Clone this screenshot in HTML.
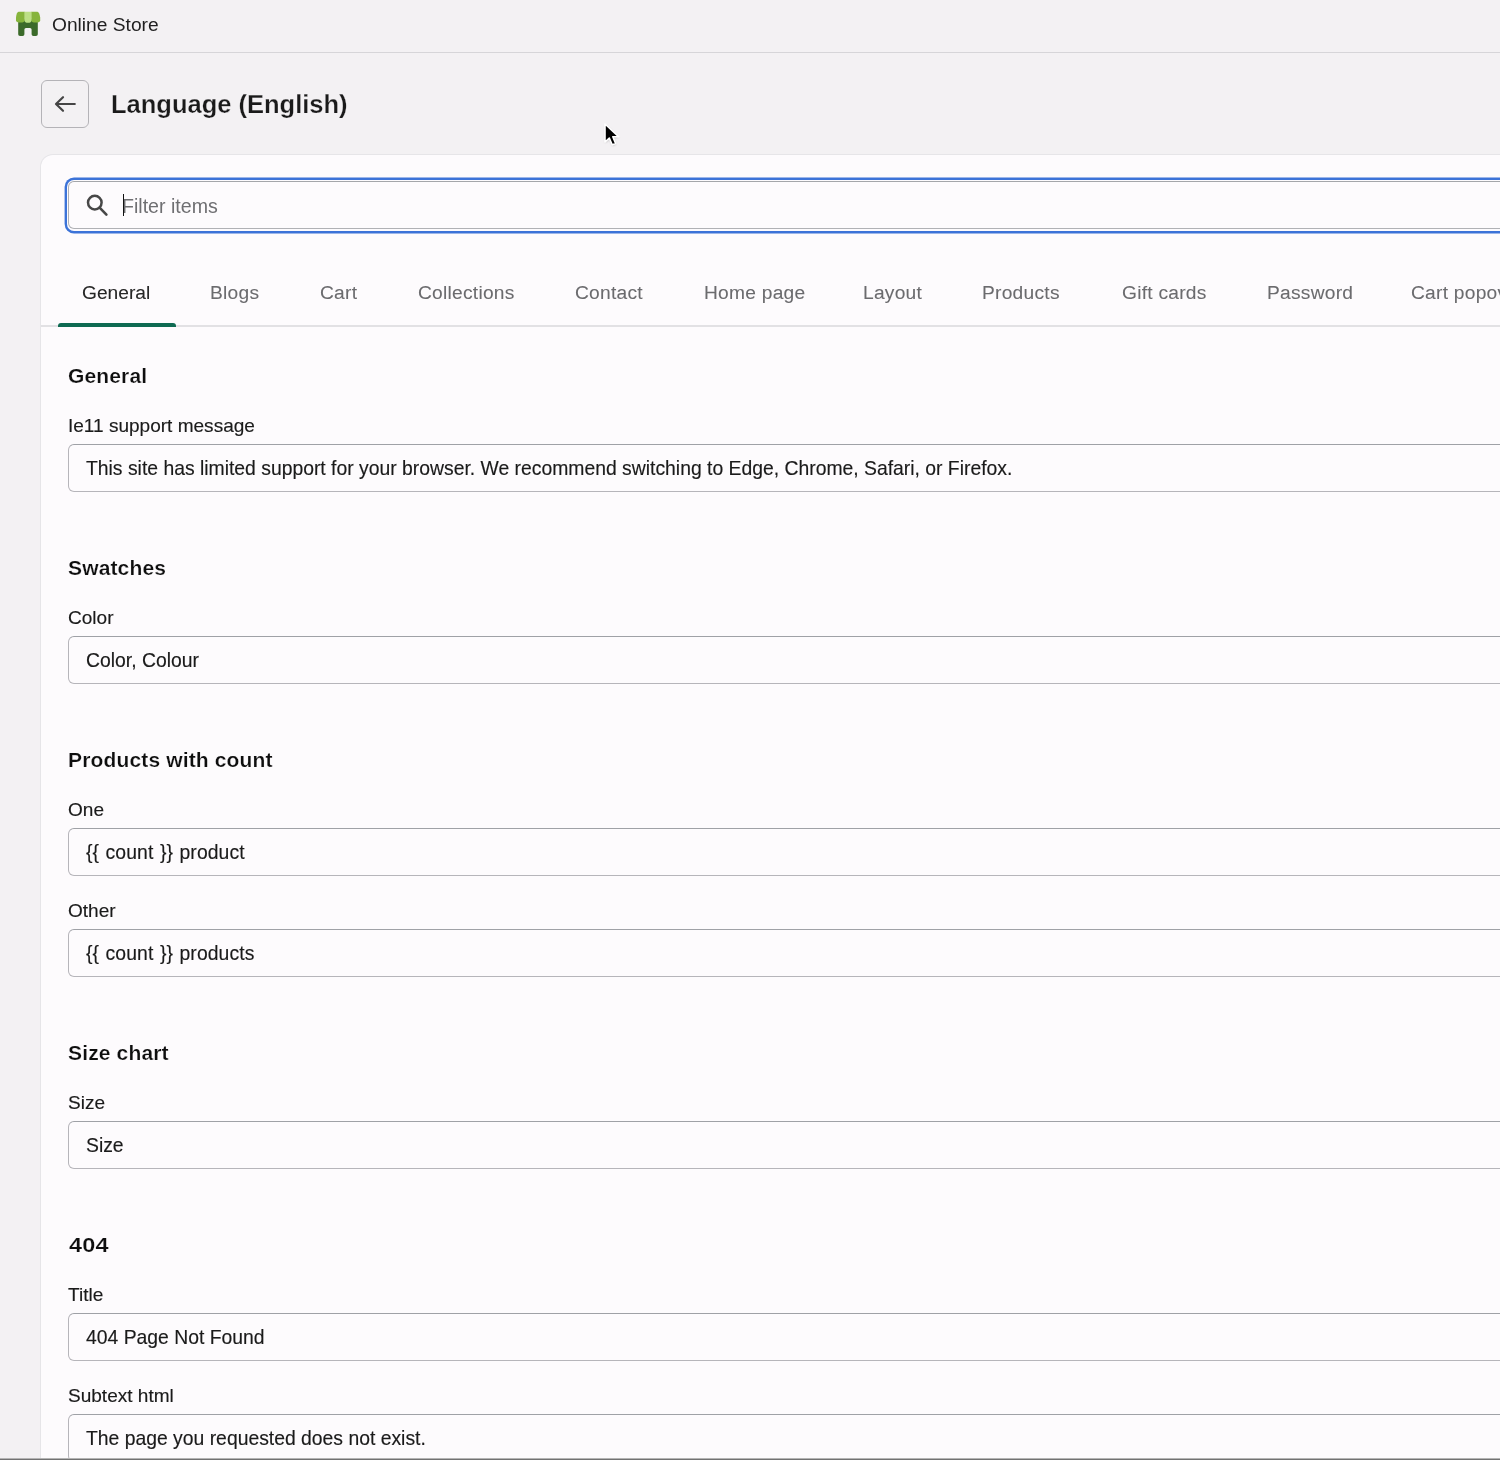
<!DOCTYPE html>
<html><head><meta charset="utf-8">
<style>
*{box-sizing:border-box;margin:0;padding:0}
html,body{width:1500px;height:1460px;overflow:hidden}
body{background:#f3f1f3;font-family:"Liberation Sans",sans-serif;color:#202020;position:relative}
.abs{position:absolute}
.lbl,.val{-webkit-text-stroke:0.15px currentColor}
.tab{-webkit-text-stroke:0.08px currentColor}
.title{-webkit-text-stroke:0.25px #f3f1f3}
.h{-webkit-text-stroke:0.2px #fdfbfd}
body>div{will-change:transform}
.topbar{position:absolute;left:0;top:0;width:1500px;height:53px;border-bottom:1px solid #d6d5d8}
.store{position:absolute;left:52px;top:13.5px;font-size:19.2px;line-height:22px;color:#1f1f1f;white-space:nowrap}
.back{position:absolute;left:41px;top:80px;width:48px;height:48px;border:1.5px solid #b4b3b7;border-radius:6px}
.title{position:absolute;left:111px;top:89px;font-size:25.5px;font-weight:bold;line-height:30px;color:#1a1a1a;white-space:nowrap}
.card{position:absolute;left:41px;top:155px;width:1500px;height:1400px;background:#fdfbfd;border-radius:12px 0 0 0;box-shadow:0 0 0 1px #e6e5e8}
.search{position:absolute;left:68px;top:181px;width:1500px;height:48px;border:1px solid #b0b1b5;border-top-color:#a4a6aa;border-radius:6px;background:#fdfbfd}
.ring{position:absolute;left:66.5px;top:179.8px;width:1500px;height:51px;border-radius:7px;box-shadow:0 0 0 2.4px #3c73d8}
.caret{position:absolute;left:123px;top:194px;width:1px;height:22px;background:#111}
.ph{position:absolute;left:122px;top:195px;font-size:19.6px;line-height:22px;color:#6f6f72;white-space:nowrap}
.tab{position:absolute;top:281.5px;font-size:19.2px;letter-spacing:0.25px;line-height:22px;color:#6b6b6e;white-space:nowrap}
.tab.on{color:#262626}
.tabline{position:absolute;left:41px;top:325px;width:1500px;height:1.5px;background:#e2e1e4}
.uline{position:absolute;left:57.5px;top:322.5px;width:117.5px;height:4px;background:#0e6a52;border-radius:3px 3px 0 0}
.h{position:absolute;left:68px;font-size:21px;letter-spacing:0.15px;margin-top:0.5px;font-weight:bold;line-height:24px;color:#0e0e0e;white-space:nowrap}
.lbl{position:absolute;left:68px;font-size:19.05px;margin-top:1px;line-height:22px;color:#1a1a1a;white-space:nowrap}
.inp{position:absolute;left:68px;width:1500px;height:48px;border:1px solid #b6b5ba;border-top-color:#9fa1a6;border-radius:6px;background:#fdfbfd}
.val{position:absolute;left:86px;font-size:19.35px;margin-top:-0.5px;line-height:22px;color:#1a1a1a;white-space:nowrap}
.bottom{position:absolute;left:0;top:1458px;width:1500px;height:2px;background:linear-gradient(#b4b4b4,#b4b4b4 50%,#727272 50%)}
</style></head>
<body>
<div class="topbar"></div>
<svg class="abs" style="left:0;top:0" width="60" height="50" viewBox="0 0 60 50">
  <path d="M18.2 19.5 H37.8 V34.3 Q37.8 36.1 36 36.1 H33.4 Q31.6 36.1 31.6 34.3 V29.6 Q31.6 28 30 28 H26 Q24.4 28 24.4 29.6 V34.3 Q24.4 36.1 22.6 36.1 H20 Q18.2 36.1 18.2 34.3 Z" fill="#3b6a2a"/>
  <path d="M18.9 11.8 H24.8 V20.2 A4.4 2.3 0 0 1 16 20.2 L16 17.6 Q16.6 11.8 18.9 11.8 Z" fill="#86b43c"/>
  <path d="M31.2 11.8 H37.1 Q39.4 11.8 40.2 17.6 L40.2 20.2 A4.5 2.3 0 0 1 31.2 20.2 Z" fill="#86b43c"/>
  <path d="M24.6 11.8 H31.4 V20.2 A3.4 2.6 0 0 1 24.6 20.2 Z" fill="#bcdf86"/>
</svg>
<div class="store">Online Store</div>

<div class="back"></div>
<svg class="abs" style="left:53px;top:94px" width="24" height="20" viewBox="0 0 24 20">
  <path d="M21.8 10 H3.5 M10 3.2 L3 10 L10 16.8" fill="none" stroke="#454545" stroke-width="2.2" stroke-linecap="round" stroke-linejoin="round"/>
</svg>
<div class="title">Language (English)</div>

<div class="card"></div>
<div class="search"></div>
<div class="ring"></div>
<svg class="abs" style="left:84px;top:193px" width="26" height="26" viewBox="0 0 26 26">
  <circle cx="10.8" cy="9.6" r="6.8" fill="none" stroke="#474747" stroke-width="2.5"/>
  <path d="M15.6 14.6 L22.4 21.6" stroke="#474747" stroke-width="2.6" stroke-linecap="round"/>
</svg>
<div class="ph">Filter items</div>
<div class="caret"></div>

<div class="tab on" style="left:82px;letter-spacing:0">General</div>
<div class="tab" style="left:209.7px">Blogs</div>
<div class="tab" style="left:319.5px">Cart</div>
<div class="tab" style="left:417.7px">Collections</div>
<div class="tab" style="left:574.7px">Contact</div>
<div class="tab" style="left:703.7px">Home page</div>
<div class="tab" style="left:863.3px">Layout</div>
<div class="tab" style="left:982.1px">Products</div>
<div class="tab" style="left:1122px">Gift cards</div>
<div class="tab" style="left:1266.6px">Password</div>
<div class="tab" style="left:1410.7px">Cart popover</div>
<div class="tabline"></div>
<div class="uline"></div>

<!-- sections -->
<div class="h" style="top:363px">General</div>
<div class="lbl" style="top:414px">Ie11 support message</div>
<div class="inp" style="top:444px"></div>
<div class="val" style="top:457px">This site has limited support for your browser. We recommend switching to Edge, Chrome, Safari, or Firefox.</div>

<div class="h" style="top:555px">Swatches</div>
<div class="lbl" style="top:606px">Color</div>
<div class="inp" style="top:636px"></div>
<div class="val" style="top:649px">Color, Colour</div>

<div class="h" style="top:747px">Products with count</div>
<div class="lbl" style="top:798px">One</div>
<div class="inp" style="top:828px"></div>
<div class="val" style="top:841px;word-spacing:1px;letter-spacing:0.1px">{{ count }} product</div>
<div class="lbl" style="top:899px">Other</div>
<div class="inp" style="top:929px"></div>
<div class="val" style="top:942px;word-spacing:1px;letter-spacing:0.1px">{{ count }} products</div>

<div class="h" style="top:1040px">Size chart</div>
<div class="lbl" style="top:1091px">Size</div>
<div class="inp" style="top:1121px"></div>
<div class="val" style="top:1134px">Size</div>

<div class="h" style="top:1232px;left:69px;transform:scaleX(1.12);transform-origin:0 0">404</div>
<div class="lbl" style="top:1283px">Title</div>
<div class="inp" style="top:1313px"></div>
<div class="val" style="top:1326px">404 Page Not Found</div>
<div class="lbl" style="top:1384px">Subtext html</div>
<div class="inp" style="top:1414px"></div>
<div class="val" style="top:1427px">The page you requested does not exist.</div>

<div class="bottom"></div>
<svg class="abs" style="left:598px;top:118px" width="30" height="34" viewBox="0 0 30 34">
  <defs><filter id="sh" x="-30%" y="-30%" width="160%" height="160%"><feGaussianBlur stdDeviation="0.8"/></filter></defs>
  <path d="M7 6 V24 L11.3 20 L14.2 26.8 L17.6 25.4 L14.8 18.8 L20.8 18.8 Z" fill="#000" opacity="0.25" filter="url(#sh)" transform="translate(0.3,1)"/>
  <path d="M7 6 V24 L11.3 20 L14.2 26.8 L17.6 25.4 L14.8 18.8 L20.8 18.8 Z" fill="#000" stroke="#fff" stroke-width="1.6" stroke-linejoin="round"/>
</svg>
</body></html>
